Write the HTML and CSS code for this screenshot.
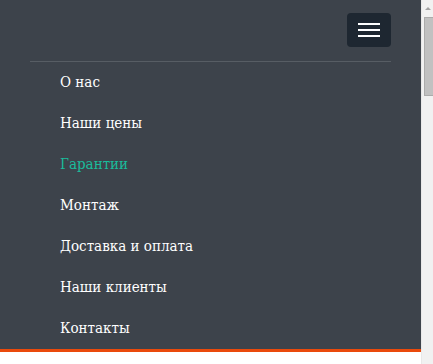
FILE: index.html
```html
<!DOCTYPE html>
<html lang="ru">
<head>
    <meta charset="UTF-8" />
    <meta name="viewport" content="width=device-width, initial-scale=1" />
    <title>Меню</title>
    <link rel="stylesheet" href="styles.css">
</head>
<body>
    <header class="navbar">
        <div class="navbar-top">
            <button class="navbar-toggler" type="button" aria-label="Меню">
                <span class="bar"></span>
                <span class="bar"></span>
                <span class="bar"></span>
            </button>
        </div>
        <ul class="menu">
            <li><a href="#">О нас</a></li>
            <li><a href="#">Наши цены</a></li>
            <li><a href="#" class="active">Гарантии</a></li>
            <li><a href="#">Монтаж</a></li>
            <li><a href="#">Доставка и оплата</a></li>
            <li><a href="#">Наши клиенты</a></li>
            <li><a href="#">Контакты</a></li>
        </ul>
    </header>
    <div class="accent"></div>
    <main class="page"></main>
    <!-- fake scrollbar, the shot is taken without one -->
    <div class="scrollbar">
        <span class="arrow"></span>
        <span class="thumb"></span>
    </div>
</body>
</html>
```

FILE: styles.css
```css
body {
    margin: 0;
    padding-right: 12px;
    background-color: #fff;
    font-family: "DejaVu Serif", serif;
}
.navbar {
    background-color: #3d434b;
    padding: 0 30px;
}
.navbar-top {
    display: flex;
    justify-content: flex-end;
    padding: 13px 0 14px 0;
    border-bottom: 1px solid #575d64;
}
.navbar-toggler {
    width: 44px;
    height: 34px;
    border: none;
    border-radius: 4px;
    background-color: #1e2731;
    display: flex;
    flex-direction: column;
    justify-content: center;
    align-items: center;
    gap: 4px;
    padding: 0;
    cursor: pointer;
}
.bar {
    display: block;
    width: 22px;
    height: 2px;
    background-color: #fff;
}
.menu {
    list-style: none;
    margin: 0;
    padding: 0 0 0 30px;
}
.menu a {
    display: block;
    padding: 10px 0;
    line-height: 21px;
    font-size: 15px;
    font-stretch: condensed;
    color: #fff;
    text-decoration: none;
}
.menu a.active {
    color: #1abc9c;
}
.accent {
    height: 3px;
    background-color: #ea4a0c;
}
.page {
    height: 300px;
}
.scrollbar {
    position: fixed;
    top: 0;
    right: 0;
    width: 12px;
    height: 100%;
    background-color: #f1f1f1;
    border-left: 1px solid #e8e8e8;
    box-sizing: border-box;
}
.arrow {
    position: absolute;
    top: 7px;
    left: 3px;
    border-left: 3px solid transparent;
    border-right: 3px solid transparent;
    border-bottom: 3px solid #a3a3a3;
}
.thumb {
    position: absolute;
    top: 17px;
    left: 2px;
    width: 10px;
    height: 79px;
    background-color: #c1c1c1;
    border: 1px solid #ababab;
    box-sizing: border-box;
}
```
